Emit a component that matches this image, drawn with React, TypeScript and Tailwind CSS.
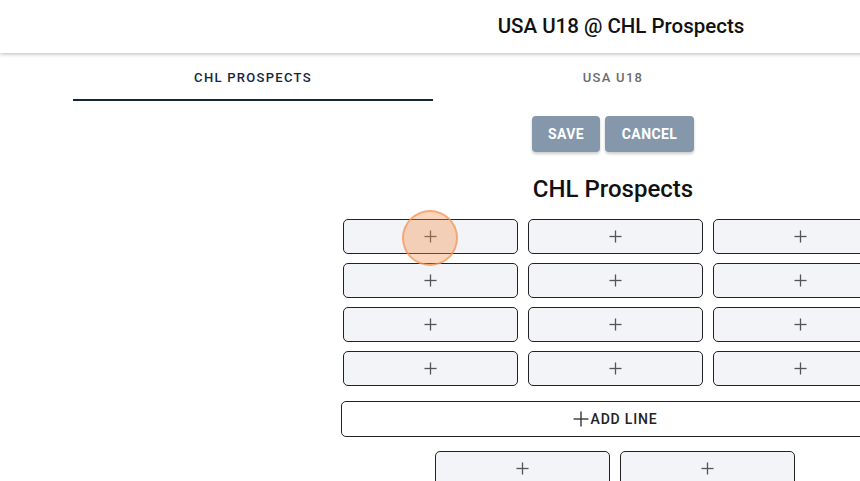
import React from "react";

function Plus({ size = 13, color = "#555", sw = 1.4 }: { size?: number; color?: string; sw?: number }) {
  return (
    <svg width={size} height={size} viewBox="0 0 14 14" fill="none">
      <line x1="7" y1="0.5" x2="7" y2="13.5" stroke={color} strokeWidth={sw} />
      <line x1="0.5" y1="7" x2="13.5" y2="7" stroke={color} strokeWidth={sw} />
    </svg>
  );
}

function Cell() {
  return (
    <div className="h-[35px] w-[175px] rounded-[5px] border border-[#222] bg-[#f3f4f8] flex items-center justify-center shrink-0">
      <Plus />
    </div>
  );
}

export default function App() {
  const rows = [0, 1, 2, 3];
  return (
    <div className="w-[860px] h-[481px] overflow-hidden bg-white relative" style={{ fontFamily: "Roboto, 'Liberation Sans', sans-serif" }}>
      <div className="w-[1242px]">
        <header className="h-[53px] bg-white flex items-center justify-center shadow-[0_1px_4px_rgba(0,0,0,0.28)] relative z-10">
          <span className="text-[20.5px] font-medium text-[#111]">USA U18 @ CHL Prospects</span>
        </header>
        <div className="w-[1230px]">
          <div className="ml-[73px] w-[720px] flex h-[48px]">
            <div className="w-[360px] flex items-center justify-center pt-[3px] border-b-2 border-[#13263d]">
              <span className="text-[13px] font-medium tracking-[1.3px] text-[#13263d]">CHL PROSPECTS</span>
            </div>
            <div className="w-[360px] flex items-center justify-center pt-[3px] border-b-2 border-transparent">
              <span className="text-[13px] font-medium tracking-[1.3px] text-[#6b6b6b]">USA U18</span>
            </div>
          </div>
          <div className="mx-auto w-[548px] flex flex-col items-center">
            <div className="mt-[15px] flex gap-[5px] -translate-x-[2px]">
              <div className="h-[36px] w-[68px] rounded-[4px] bg-[#8597ab] shadow-[0_2px_3px_rgba(0,0,0,0.2)] flex items-center justify-center text-white text-[14px] font-bold tracking-[0.4px]">SAVE</div>
              <div className="h-[36px] w-[89px] rounded-[4px] bg-[#8597ab] shadow-[0_2px_3px_rgba(0,0,0,0.2)] flex items-center justify-center text-white text-[14px] font-bold tracking-[0.4px]">CANCEL</div>
            </div>
            <h2 className="mt-[22px] h-[30px] leading-[30px] text-[24px] font-medium text-[#111] -translate-x-[2px]">CHL Prospects</h2>
            <div className="mt-[15px] flex flex-col gap-[9px]">
              {rows.map((r) => (
                <div key={r} className="flex gap-[10px]">
                  <Cell />
                  <Cell />
                  <Cell />
                </div>
              ))}
            </div>
            <div className="mt-[15px] h-[36px] w-[548px] rounded-[5px] border border-[#222] bg-white flex items-center justify-center gap-[2px]">
              <Plus size={16} color="#333" sw={1.2} />
              <span className="text-[14px] font-medium tracking-[0.8px] text-[#222]">ADD LINE</span>
            </div>
            <div className="mt-[14px] flex gap-[10px]">
              <Cell />
              <Cell />
            </div>
          </div>
        </div>
      </div>
      <div className="absolute left-[402px] top-[210px] w-[56px] h-[56px] rounded-full bg-[rgba(247,140,70,0.36)] border-2 border-[rgba(242,150,90,0.7)]" />
    </div>
  );
}
